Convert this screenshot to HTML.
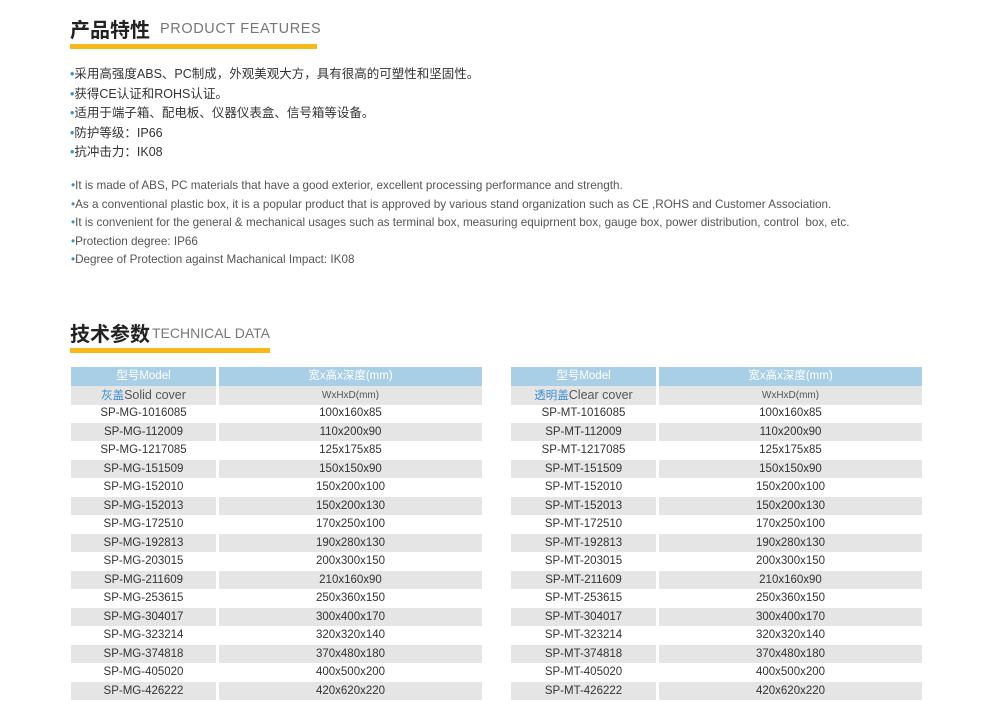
<!DOCTYPE html>
<html><head><meta charset="utf-8">
<style>
*{margin:0;padding:0;box-sizing:border-box}
body{width:988px;height:725px;background:#fff;position:relative;overflow:hidden;font-family:"Liberation Sans","Noto Sans CJK SC",sans-serif;color:#333}
.t{position:absolute;white-space:nowrap}
.h1{font-size:20px;font-weight:bold;color:#222;font-family:"Noto Sans CJK SC",sans-serif}
.h2{font-size:14.5px;color:#777;letter-spacing:0.6px}
.bar{position:absolute;height:5px;background:#f7b818}
.cn{font-size:12.5px;color:#333;font-family:"Liberation Sans","Noto Sans CJK SC",sans-serif}
.en{font-size:11.7px;color:#555}
.b{color:#3a8fcf}
.c{position:absolute;height:18.5px;line-height:18.5px;text-align:center;font-size:11.5px;color:#333}
.g{background:#e5e5e5}
.hd{background:#a8cfe6;color:#fff;font-size:11.5px}
</style></head><body>
<div class="t h1" style="left:70px;top:14px">产品特性</div>
<div class="t h2" style="left:160px;top:21px">PRODUCT FEATURES</div>
<div class="bar" style="left:70px;top:44px;width:247px"></div>
<div class="t cn" style="left:70px;top:65px;line-height:19.5px">
<span class="b">•</span>采用高强度ABS、PC制成，外观美观大方，具有很高的可塑性和坚固性。<br>
<span class="b">•</span>获得CE认证和ROHS认证。<br>
<span class="b">•</span>适用于端子箱、配电板、仪器仪表盒、信号箱等设备。<br>
<span class="b">•</span>防护等级：IP66<br>
<span class="b">•</span>抗冲击力：IK08</div>
<div class="t en" style="left:71px;top:177px;line-height:18.6px">
<span class="b">•</span>It is made of ABS, PC materials that have a good exterior, excellent processing performance and strength.<br>
<span class="b">•</span>As a conventional plastic box, it is a popular product that is approved by various stand organization such as CE ,ROHS and Customer Association.<br>
<span class="b">•</span>It is convenient for the general &amp; mechanical usages such as terminal box, measuring equiprnent box, gauge box, power distribution, control &nbsp;box, etc.<br>
<span class="b">•</span>Protection degree: IP66<br>
<span class="b">•</span>Degree of Protection against Machanical Impact: IK08</div>
<div class="t h1" style="left:70px;top:318px">技术参数</div>
<div class="t h2" style="left:152px;top:325px;font-size:14px;letter-spacing:0">TECHNICAL DATA</div>
<div class="bar" style="left:70px;top:348px;width:200px"></div>
<div id="tb"></div>
<script>
var m=["1016085","112009","1217085","151509","152010","152013","172510","192813","203015","211609","253615","304017","323214","374818","405020","426222"];
var d=["100x160x85","110x200x90","125x175x85","150x150x90","150x200x100","150x200x130","170x250x100","190x280x130","200x300x150","210x160x90","250x360x150","300x400x170","320x320x140","370x480x180","400x500x200","420x620x220"];
var h="";
function tab(x1,x2,pre,lab){
 h+='<div class="c hd" style="left:'+x1+'px;top:367px;width:145px;height:19px">型号Model</div>';
 h+='<div class="c hd" style="left:'+x2+'px;top:367px;width:263px;height:19px">宽x高x深度(mm)</div>';
 for(var i=0;i<17;i++){
  var y=386+i*18.47,g=i%2==0?' g':'';
  var a=i==0?lab:pre+m[i-1], b=i==0?'<span style="font-size:10px;color:#555">WxHxD(mm)</span>':d[i-1];
  h+='<div class="c'+g+'" style="left:'+x1+'px;top:'+y+'px;width:145px">'+a+'</div>';
  h+='<div class="c'+g+'" style="left:'+x2+'px;top:'+y+'px;width:263px">'+b+'</div>';
 }
}
tab(71,219,"SP-MG-",'<span style="color:#3a8fcf">灰盖</span><span style="font-size:12.5px;color:#555">Solid cover</span>');
tab(511,659,"SP-MT-",'<span style="color:#3a8fcf">透明盖</span><span style="font-size:12.5px;color:#555">Clear cover</span>');
document.getElementById("tb").innerHTML=h;
</script>
</body></html>
